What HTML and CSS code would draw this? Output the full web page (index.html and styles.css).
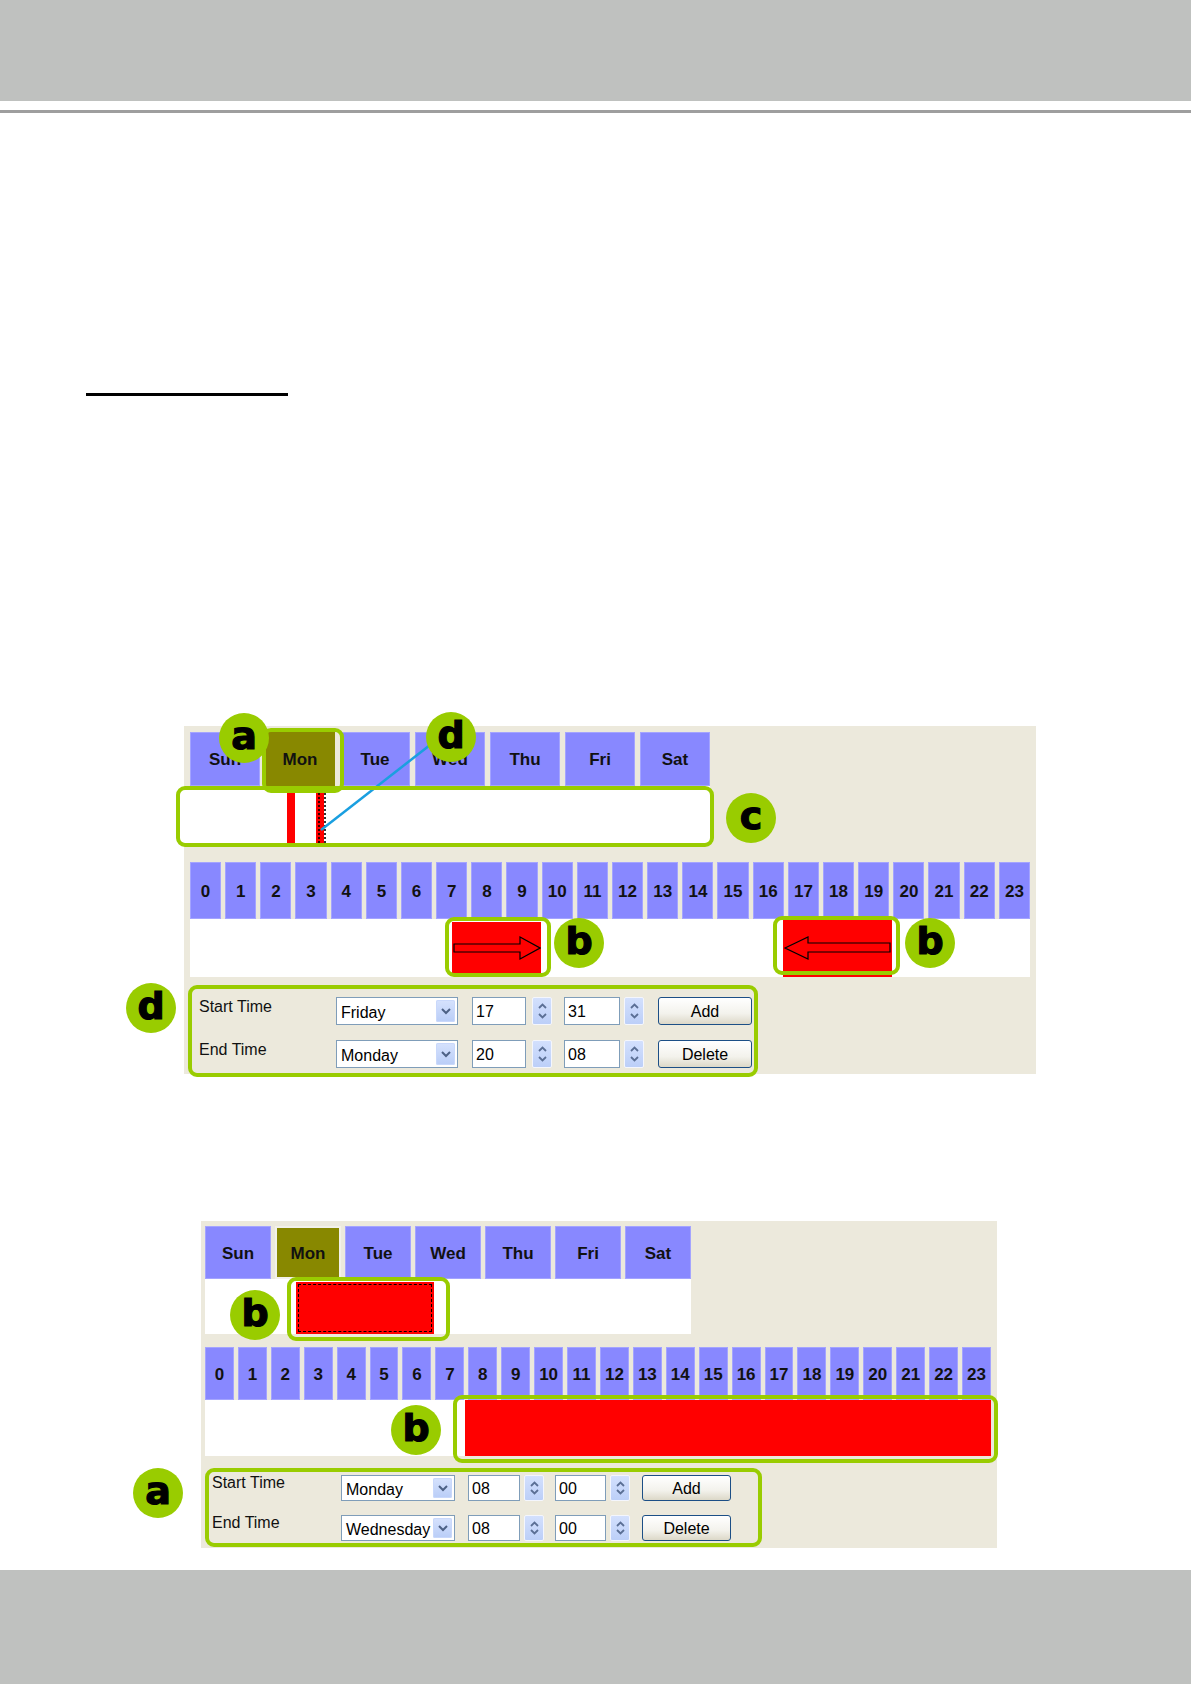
FILE: index.html
```html
<!DOCTYPE html>
<html lang="en">
<head>
<meta charset="utf-8">
<title>Schedule</title>
<link rel="stylesheet" href="styles.css">
</head>
<body>
<header class="topbar"></header>
<div class="rule"></div>
<div class="heading-line"></div>

<section class="panel p1">
  <div class="days">
    <div class="tab">Sun</div><div class="tab sel">Mon</div><div class="tab">Tue</div><div class="tab">Wed</div><div class="tab">Thu</div><div class="tab">Fri</div><div class="tab">Sat</div>
  </div>
  <div class="band dayband">
    <div class="seg" style="left:107px;width:8px"></div>
    <div class="seg dotted" style="left:136px;width:8px"></div>
  </div>
  <div class="hours">
    <div class="tab">0</div><div class="tab">1</div><div class="tab">2</div><div class="tab">3</div><div class="tab">4</div><div class="tab">5</div><div class="tab">6</div><div class="tab">7</div><div class="tab">8</div><div class="tab">9</div><div class="tab">10</div><div class="tab">11</div><div class="tab">12</div><div class="tab">13</div><div class="tab">14</div><div class="tab">15</div><div class="tab">16</div><div class="tab">17</div><div class="tab">18</div><div class="tab">19</div><div class="tab">20</div><div class="tab">21</div><div class="tab">22</div><div class="tab">23</div>
  </div>
  <div class="band hourband">
    <div class="seg" style="left:262px;width:89px;top:3px;bottom:3px">
      <svg class="arrow" width="89" height="52" viewBox="0 0 89 52"><polygon points="2,22 68,22 68,15 88,26 68,37 68,30 2,30" fill="#ff0000" stroke="#000" stroke-width="1.2"/></svg>
    </div>
    <div class="seg" style="left:593px;width:109px">
      <svg class="arrow" width="109" height="58" viewBox="0 0 109 58"><polygon points="2,29 25,18 25,24 107,24 107,33 25,33 25,40" fill="#ff0000" stroke="#000" stroke-width="1.2"/></svg>
    </div>
  </div>
  <div class="form">
    <div class="row">
      <span class="label">Start Time</span>
      <div class="select"><span class="val">Friday</span><span class="dd"><svg width="10" height="7" viewBox="0 0 10 7"><path d="M1 1 L5 5 L9 1" fill="none" stroke="#4d6185" stroke-width="2"/></svg></span></div>
      <div class="num n1">17</div>
      <div class="spin"><svg width="9" height="6" viewBox="0 0 9 6"><path d="M1 5 L4.5 1.5 L8 5" fill="none" stroke="#5b6f95" stroke-width="1.8"/></svg><svg width="9" height="6" viewBox="0 0 9 6"><path d="M1 1 L4.5 4.5 L8 1" fill="none" stroke="#5b6f95" stroke-width="1.8"/></svg></div>
      <div class="num n2">31</div>
      <div class="spin s2"><svg width="9" height="6" viewBox="0 0 9 6"><path d="M1 5 L4.5 1.5 L8 5" fill="none" stroke="#5b6f95" stroke-width="1.8"/></svg><svg width="9" height="6" viewBox="0 0 9 6"><path d="M1 1 L4.5 4.5 L8 1" fill="none" stroke="#5b6f95" stroke-width="1.8"/></svg></div>
      <button class="btn">Add</button>
    </div>
    <div class="row">
      <span class="label">End Time</span>
      <div class="select"><span class="val">Monday</span><span class="dd"><svg width="10" height="7" viewBox="0 0 10 7"><path d="M1 1 L5 5 L9 1" fill="none" stroke="#4d6185" stroke-width="2"/></svg></span></div>
      <div class="num n1">20</div>
      <div class="spin"><svg width="9" height="6" viewBox="0 0 9 6"><path d="M1 5 L4.5 1.5 L8 5" fill="none" stroke="#5b6f95" stroke-width="1.8"/></svg><svg width="9" height="6" viewBox="0 0 9 6"><path d="M1 1 L4.5 4.5 L8 1" fill="none" stroke="#5b6f95" stroke-width="1.8"/></svg></div>
      <div class="num n2">08</div>
      <div class="spin s2"><svg width="9" height="6" viewBox="0 0 9 6"><path d="M1 5 L4.5 1.5 L8 5" fill="none" stroke="#5b6f95" stroke-width="1.8"/></svg><svg width="9" height="6" viewBox="0 0 9 6"><path d="M1 1 L4.5 4.5 L8 1" fill="none" stroke="#5b6f95" stroke-width="1.8"/></svg></div>
      <button class="btn">Delete</button>
    </div>
  </div>

  <svg class="pointer" width="852" height="348" viewBox="0 0 852 348"><line x1="246" y1="19" x2="137" y2="104" stroke="#1a9fe0" stroke-width="2.5"/></svg>
  <div class="mark m1a"></div>
  <div class="mark m1c"></div>
  <div class="mark m1b1"></div>
  <div class="mark m1b2"></div>
  <div class="mark m1d"></div>
  <div class="badge b1a">a</div>
  <div class="badge b1d">d</div>
  <div class="badge b1c">c</div>
  <div class="badge b1b1">b</div>
  <div class="badge b1b2">b</div>
  <div class="badge b1d2">d</div>
</section>

<section class="panel p2">
  <div class="days">
    <div class="tab">Sun</div><div class="tab sel">Mon</div><div class="tab">Tue</div><div class="tab">Wed</div><div class="tab">Thu</div><div class="tab">Fri</div><div class="tab">Sat</div>
  </div>
  <div class="band dayband">
    <div class="seg dashed" style="left:91px;width:138px;top:3px"></div>
  </div>
  <div class="hours">
    <div class="tab">0</div><div class="tab">1</div><div class="tab">2</div><div class="tab">3</div><div class="tab">4</div><div class="tab">5</div><div class="tab">6</div><div class="tab">7</div><div class="tab">8</div><div class="tab">9</div><div class="tab">10</div><div class="tab">11</div><div class="tab">12</div><div class="tab">13</div><div class="tab">14</div><div class="tab">15</div><div class="tab">16</div><div class="tab">17</div><div class="tab">18</div><div class="tab">19</div><div class="tab">20</div><div class="tab">21</div><div class="tab">22</div><div class="tab">23</div>
  </div>
  <div class="band hourband">
    <div class="seg" style="left:260px;width:526px"></div>
  </div>
  <div class="form">
    <div class="row">
      <span class="label">Start Time</span>
      <div class="select"><span class="val">Monday</span><span class="dd"><svg width="10" height="7" viewBox="0 0 10 7"><path d="M1 1 L5 5 L9 1" fill="none" stroke="#4d6185" stroke-width="2"/></svg></span></div>
      <div class="num n1">08</div>
      <div class="spin"><svg width="9" height="6" viewBox="0 0 9 6"><path d="M1 5 L4.5 1.5 L8 5" fill="none" stroke="#5b6f95" stroke-width="1.8"/></svg><svg width="9" height="6" viewBox="0 0 9 6"><path d="M1 1 L4.5 4.5 L8 1" fill="none" stroke="#5b6f95" stroke-width="1.8"/></svg></div>
      <div class="num n2">00</div>
      <div class="spin s2"><svg width="9" height="6" viewBox="0 0 9 6"><path d="M1 5 L4.5 1.5 L8 5" fill="none" stroke="#5b6f95" stroke-width="1.8"/></svg><svg width="9" height="6" viewBox="0 0 9 6"><path d="M1 1 L4.5 4.5 L8 1" fill="none" stroke="#5b6f95" stroke-width="1.8"/></svg></div>
      <button class="btn">Add</button>
    </div>
    <div class="row">
      <span class="label">End Time</span>
      <div class="select"><span class="val">Wednesday</span><span class="dd"><svg width="10" height="7" viewBox="0 0 10 7"><path d="M1 1 L5 5 L9 1" fill="none" stroke="#4d6185" stroke-width="2"/></svg></span></div>
      <div class="num n1">08</div>
      <div class="spin"><svg width="9" height="6" viewBox="0 0 9 6"><path d="M1 5 L4.5 1.5 L8 5" fill="none" stroke="#5b6f95" stroke-width="1.8"/></svg><svg width="9" height="6" viewBox="0 0 9 6"><path d="M1 1 L4.5 4.5 L8 1" fill="none" stroke="#5b6f95" stroke-width="1.8"/></svg></div>
      <div class="num n2">00</div>
      <div class="spin s2"><svg width="9" height="6" viewBox="0 0 9 6"><path d="M1 5 L4.5 1.5 L8 5" fill="none" stroke="#5b6f95" stroke-width="1.8"/></svg><svg width="9" height="6" viewBox="0 0 9 6"><path d="M1 1 L4.5 4.5 L8 1" fill="none" stroke="#5b6f95" stroke-width="1.8"/></svg></div>
      <button class="btn">Delete</button>
    </div>
  </div>

  <div class="mark m2b1"></div>
  <div class="mark m2b2"></div>
  <div class="mark m2a"></div>
  <div class="badge b2b1">b</div>
  <div class="badge b2b2">b</div>
  <div class="badge b2a">a</div>
</section>

<footer class="bottombar"></footer>
</body>
</html>
```

FILE: styles.css
```css
* { box-sizing: border-box; }
html, body { margin: 0; padding: 0; }
body {
  width: 1191px;
  height: 1684px;
  overflow: hidden;
  background: #ffffff;
  font-family: "Liberation Sans", Arial, sans-serif;
  color: #000;
}

.topbar { height: 101px; background: #bfc1bf; }
.rule { margin-top: 9px; height: 3px; background: #9e9e9e; }
.heading-line { margin: 280px 0 0 86px; width: 202px; height: 3px; background: #000; }
.bottombar { margin-top: 22px; height: 114px; background: #bfc1bf; }

.panel { position: relative; background: #ece9dc; }
.p1 { margin: 330px 0 0 184px; width: 852px; height: 348px; padding: 6px 0 0 6px; }
.p2 { margin: 147px 0 0 201px; width: 796px; height: 327px; padding: 5px 0 0 4px; }

.days, .hours { display: grid; }
.p1 .days { grid-template-columns: repeat(7, 70px); column-gap: 5px; height: 54px; }
.p2 .days { grid-template-columns: repeat(7, 66px); column-gap: 4px; height: 53px; }
.p1 .hours { grid-template-columns: repeat(24, 1fr); column-gap: 4px; width: 840px; height: 57px; margin-top: 19px; }
.p2 .hours { grid-template-columns: repeat(24, 1fr); column-gap: 4px; width: 786px; height: 53px; margin-top: 13px; }

.tab {
  background: #8888ff;
  border: 1px solid #a4a4ff;
  display: flex;
  align-items: center;
  justify-content: center;
  font-weight: bold;
  font-size: 17px;
  color: #111;
  padding-top: 2px;
}
.tab.sel { background: #888800; border: 2px solid #f2f1ea; }
.p1 .tab.sel { border-color: #888800; }

.band { position: relative; background: #ffffff; }
.p1 .dayband { width: 530px; margin-left: -10px; height: 57px; }
.p2 .dayband { width: 486px; height: 55px; }
.p1 .hourband { width: 840px; height: 58px; }
.p2 .hourband { width: 786px; height: 56px; }

.seg { position: absolute; top: 0; bottom: 0; background: #ff0000; }
.seg.dotted::after {
  content: "";
  position: absolute;
  left: 2px; top: 0; bottom: 0; width: 4px;
  border-left: 2px dotted #000;
  border-right: 2px dotted #000;
  opacity: 0.8;
}
.seg.dashed::after {
  content: "";
  position: absolute;
  inset: 2px 2px 2px 2px;
  border: 1px dashed #000;
}
.arrow { display: block; }

.form { display: flex; flex-direction: column; }
.p1 .form { margin: 20px 0 0 9px; row-gap: 15px; }
.p2 .form { margin: 19px 0 0 7px; row-gap: 14px; }
.row { display: flex; align-items: center; }
.p1 .row { height: 28px; }
.p2 .row { height: 26px; }
.label { align-self: flex-start; font-size: 16px; line-height: 18px; color: #111; }
.p1 .label { width: 137px; margin-top: 1px; }
.p2 .label { width: 129px; margin-top: 0; line-height: 16px; }

.select {
  height: 100%;
  border: 1px solid #7f9db9;
  background: #fff;
  display: flex;
  align-items: center;
  justify-content: space-between;
  padding: 2px 2px 2px 4px;
  font-size: 16px;
}
.select .val { padding-top: 3px; }
.p1 .select { width: 122px; }
.p2 .select { width: 114px; }
.dd {
  width: 19px;
  height: 100%;
  border-radius: 2px;
  background: linear-gradient(#d6e2fd, #b9cdf7);
  box-shadow: inset 0 0 0 1px #c9d8fb;
  display: flex;
  align-items: center;
  justify-content: center;
}
.num {
  height: 100%;
  border: 1px solid #7f9db9;
  background: #fff;
  font-size: 16px;
  display: flex;
  align-items: center;
  padding: 2px 0 0 3px;
}
.p1 .num.n1 { width: 54px; margin-left: 14px; }
.p1 .num.n2 { width: 56px; margin-left: 12px; }
.p2 .num.n1 { width: 52px; margin-left: 13px; }
.p2 .num.n2 { width: 51px; margin-left: 11px; }

.spin {
  width: 20px;
  height: 100%;
  display: flex;
  flex-direction: column;
  align-items: center;
  justify-content: space-evenly;
  border: 1px solid #f4f6fd;
  border-radius: 2px;
  background: linear-gradient(#d3e0fd, #bccff8);
  padding: 2px 0;
}
.spin svg { display: block; }
.p1 .spin { margin-left: 6px; }
.p1 .spin.s2 { margin-left: 4px; }
.p2 .spin { margin-left: 4px; }

.btn {
  height: 100%;
  border: 1px solid #1c4f86;
  border-radius: 3px;
  background: linear-gradient(#ffffff, #f3f2ec 60%, #dcd8c8);
  font-family: "Liberation Sans", Arial, sans-serif;
  font-size: 16px;
  color: #000;
  padding: 2px 0 0 0;
}
.p1 .btn { width: 94px; margin-left: 14px; }
.p2 .btn { width: 89px; margin-left: 12px; }

/* annotation overlays */
.pointer { position: absolute; left: 0; top: 0; pointer-events: none; }
.mark {
  position: absolute;
  border: 4px solid #99cc00;
  border-radius: 9px;
  pointer-events: none;
}
.badge {
  position: absolute;
  width: 50px;
  height: 50px;
  border-radius: 50%;
  background: #99cc00;
  display: flex;
  align-items: center;
  justify-content: center;
  font-family: "DejaVu Sans", sans-serif;
  font-weight: bold;
  font-size: 38px;
  line-height: 1;
  color: #000;
  -webkit-text-stroke: 1.2px #000;
  padding-bottom: 4px;
}

.m1a { left: 78px; top: 2px; width: 82px; height: 65px; }
.m1c { left: -8px; top: 60px; width: 538px; height: 61px; }
.m1b1 { left: 261px; top: 191px; width: 106px; height: 60px; }
.m1b2 { left: 589px; top: 190px; width: 127px; height: 59px; }
.m1d { left: 4px; top: 259px; width: 570px; height: 92px; }
.b1a { left: 35px; top: -13px; }
.b1d { left: 242px; top: -14px; }
.b1c { left: 542px; top: 67px; }
.b1b1 { left: 370px; top: 192px; }
.b1b2 { left: 721px; top: 192px; }
.b1d2 { left: -58px; top: 257px; }

.m2b1 { left: 86px; top: 56px; width: 163px; height: 64px; }
.m2b2 { left: 252px; top: 174px; width: 545px; height: 68px; }
.m2a { left: 4px; top: 247px; width: 557px; height: 79px; }
.b2b1 { left: 29px; top: 69px; }
.b2b2 { left: 190px; top: 184px; }
.b2a { left: -68px; top: 247px; }
```
